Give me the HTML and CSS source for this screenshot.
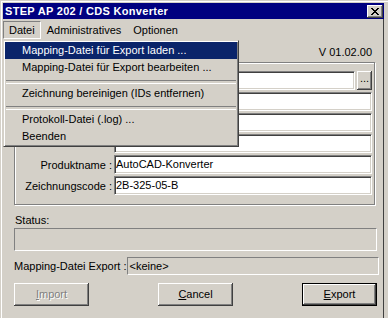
FILE: index.html
```html
<!DOCTYPE html>
<html lang="de">
<head>
<meta charset="utf-8">
<title>STEP AP 202 / CDS Konverter</title>
<link rel="stylesheet" href="styles.css">
</head>
<body>
<div class="window">
  <div class="titlebar">
    <span class="title">STEP AP 202 / CDS Konverter</span>
    <span class="close"><svg width="8" height="7" viewBox="0 0 8 7" shape-rendering="crispEdges"><g fill="#000"><rect x="0" y="0" width="2" height="1"/><rect x="6" y="0" width="2" height="1"/><rect x="1" y="1" width="2" height="1"/><rect x="5" y="1" width="2" height="1"/><rect x="2" y="2" width="4" height="1"/><rect x="3" y="3" width="2" height="1"/><rect x="2" y="4" width="4" height="1"/><rect x="1" y="5" width="2" height="1"/><rect x="5" y="5" width="2" height="1"/><rect x="0" y="6" width="2" height="1"/><rect x="6" y="6" width="2" height="1"/></g></svg></span>
  </div>
  <div class="frame">
    <div class="menubar">
      <span class="mitem open">Datei</span>
      <span class="mitem">Administratives</span>
      <span class="mitem">Optionen</span>
    </div>
    <div class="client">
      <div class="version">V 01.02.00</div>
      <div class="group">
        <div class="row"><span class="label"></span><span class="edit edit-short"></span><span class="browse">...</span></div>
        <div class="row"><span class="label"></span><span class="edit"></span></div>
        <div class="row"><span class="label"></span><span class="edit"></span></div>
        <div class="row"><span class="label"></span><span class="edit"></span></div>
        <div class="row"><span class="label">Produktname :</span><span class="edit">AutoCAD-Konverter</span></div>
        <div class="row"><span class="label">Zeichnungscode :</span><span class="edit">2B-325-05-B</span></div>
      </div>
      <div class="status-label">Status:</div>
      <div class="status-box"></div>
      <div class="mapping-row"><span class="mapping-label">Mapping-Datei Export :</span><span class="static">&lt;keine&gt;</span></div>
      <div class="buttons">
        <span class="btn disabled"><u>I</u>mport</span>
        <span class="btn"><u>C</u>ancel</span>
        <span class="btn default"><u>E</u>xport</span>
      </div>
    </div>
  </div>
  <div class="dropdown">
    <div class="ditem active">Mapping-Datei für Export laden ...</div>
    <div class="ditem">Mapping-Datei für Export bearbeiten ...</div>
    <div class="dsep"></div>
    <div class="ditem">Zeichnung bereinigen (IDs entfernen)</div>
    <div class="dsep"></div>
    <div class="ditem">Protokoll-Datei (.log) ...</div>
    <div class="ditem">Beenden</div>
  </div>
</div>
</body>
</html>
```
FILE: styles.css
```css
* { box-sizing: border-box; }
html, body { margin: 0; padding: 0; }
body {
  width: 388px;
  height: 318px;
  overflow: hidden;
  background: #d4d0c8;
  font-family: "Liberation Sans", Arial, sans-serif;
  font-size: 11px;
  color: #000;
}
.window {
  position: relative;
  display: flex;
  flex-direction: column;
  width: 388px;
  height: 318px;
  padding: 3px 4px 0 3px;
  background: #d4d0c8;
  box-shadow: inset 1px 1px #d4d0c8, inset 2px 2px #fff;
}
.titlebar {
  display: flex;
  align-items: center;
  height: 16px;
  flex-shrink: 0;
  background: #000080;
  color: #fff;
  padding-left: 2px;
}
.title {
  flex: 1;
  font-weight: bold;
  font-size: 11px;
  line-height: 16px;
  letter-spacing: 0.3px;
  white-space: nowrap;
}
.close {
  display: flex;
  align-items: center;
  justify-content: center;
  width: 16px;
  height: 13px;
  margin-right: 1px;
  background: #d4d0c8;
  box-shadow: inset -1px -1px #404040, inset 1px 1px #fff, inset -2px -2px #808080;
}
.frame {
  flex: 1;
  border-right: 1px solid #404040;
}
.menubar {
  display: flex;
  height: 21px;
  padding-top: 2px;
}
.mitem {
  height: 18px;
  line-height: 16px;
  padding: 0 5px;
  border: 1px solid transparent;
  white-space: nowrap;
}
.mitem.open { border-color: #808080 #fff #fff #808080; }
.client { padding-left: 11px; }
.version {
  margin-top: 6px;
  width: 358px;
  text-align: right;
  line-height: 13px;
}
.group {
  margin-top: 3px;
  width: 361px;
  height: 143px;
  border: 1px solid #808080;
  box-shadow: inset 1px 1px #fff, 1px 1px #fff;
  padding-top: 8px;
  display: flex;
  flex-direction: column;
  gap: 2px;
}
.row {
  display: flex;
  align-items: center;
  height: 19px;
}
.label {
  width: 97px;
  flex-shrink: 0;
  margin-right: 2px;
  text-align: right;
  white-space: nowrap;
}
.edit {
  width: 258px;
  height: 19px;
  flex-shrink: 0;
  line-height: 17px;
  padding-left: 1px;
  background: #fff;
  border: 1px solid;
  border-color: #808080 #fff #fff #808080;
  box-shadow: inset 1px 1px #404040, inset -1px -1px #d4d0c8;
  white-space: nowrap;
}
.edit-short { width: 241px; margin-right: 2px; }
.browse {
  width: 15px;
  height: 19px;
  flex-shrink: 0;
  line-height: 15px;
  text-align: center;
  background: #d4d0c8;
  box-shadow: inset -1px -1px #404040, inset 1px 1px #fff, inset -2px -2px #808080;
}
.status-label {
  margin-top: 9px;
  line-height: 13px;
  padding-left: 1px;
}
.status-box {
  margin-top: 1px;
  width: 363px;
  height: 23px;
  border: 1px solid;
  border-color: #808080 #fff #fff #808080;
}
.mapping-row {
  display: flex;
  align-items: center;
  justify-content: space-between;
  width: 363px;
  height: 18px;
  margin-top: 6px;
}
.mapping-label {
  white-space: nowrap;
  flex-shrink: 0;
}
.static {
  width: 252px;
  height: 18px;
  flex-shrink: 0;
  line-height: 16px;
  padding-left: 2px;
  border: 1px solid;
  border-color: #808080 #fff #fff #808080;
  white-space: nowrap;
}
.buttons {
  display: flex;
  justify-content: space-between;
  width: 363px;
  margin-top: 8px;
}
.btn {
  width: 75px;
  height: 23px;
  line-height: 23px;
  text-align: center;
  background: #d4d0c8;
  box-shadow: inset -1px -1px #404040, inset 1px 1px #fff, inset -2px -2px #808080;
}
.btn.disabled {
  color: #808080;
  text-shadow: 1px 1px #fff;
}
.btn.default {
  border: 1px solid #000;
  line-height: 21px;
}
.dropdown {
  position: absolute;
  left: 3px;
  top: 40px;
  width: 236px;
  padding: 1px;
  background: #d4d0c8;
  border: 1px solid;
  border-color: #d4d0c8 #404040 #404040 #d4d0c8;
  box-shadow: inset 1px 1px #fff, inset -1px -1px #808080;
}
.ditem {
  height: 17px;
  line-height: 17px;
  padding-left: 17px;
  white-space: nowrap;
}
.ditem.active {
  background: #0a246a;
  color: #fff;
}
.dsep {
  height: 9px;
  padding: 4px 1px 0;
}
.dsep::before {
  content: "";
  display: block;
  height: 2px;
  border-top: 1px solid #808080;
  border-bottom: 1px solid #fff;
}
```
